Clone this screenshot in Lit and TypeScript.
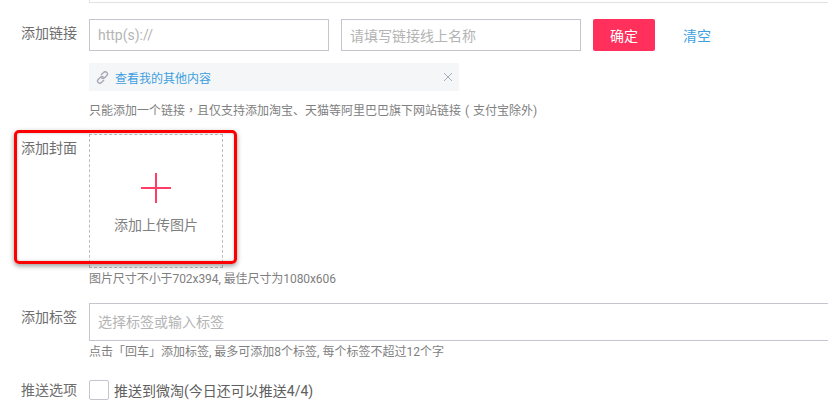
import { LitElement, html, css } from "lit";
import { customElement } from "lit/decorators.js";

@customElement("app-root")
export class AppRoot extends LitElement {
  static styles = css`
    :host {
      display: block;
      width: 828px;
      height: 406px;
      overflow: hidden;
      position: relative;
      background: #fff;
      font-family: Roboto, "Noto Sans CJK SC", sans-serif;
      font-size: 14px;
      color: #6e6e6e;
    }
    .page { padding-left: 21px; }
    .top-input {
      margin-left: 89px;
      width: 800px;
      height: 3px;
      box-sizing: border-box;
      border-bottom: 1px solid #e2e2e6;
      border-left: 1px solid #e2e2e6;
    }
    .row { display: flex; }
    .label { width: 68px; flex: none; line-height: 20px; white-space: nowrap; }
    .body { flex: 1; min-width: 0; }
    .links { margin-top: 16px; }
    .links .label { padding-top: 4px; }
    .controls { display: flex; gap: 12px; align-items: stretch; height: 32px; }
    .input {
      box-sizing: border-box;
      border: 1px solid #c4c6cf;
      padding: 0 8px 1px 8px;
      color: #b4b4b4;
      display: flex;
      align-items: center;
      white-space: nowrap;
    }
    .w240 { width: 240px; }
    .btn {
      width: 62px;
      background: #ff305c;
      color: #fff;
      border-radius: 2px;
      display: flex;
      align-items: center;
      justify-content: center;
      padding-bottom: 1px;
      box-sizing: border-box;
    }
    .clear { color: #3d9fe0; margin-left: 16px; display: flex; align-items: center; padding-bottom: 1px; }
    .linkbox {
      margin-top: 12px;
      width: 370px;
      height: 28px;
      box-sizing: border-box;
      background: #f5f6f8;
      display: flex;
      align-items: center;
      padding: 0 6px 0 7px;
      font-size: 12px;
      color: #3d9fe0;
    }
    .linkbox svg.chain { margin-right: 6px; }
    .linkbox span { flex: 1; }
    .hint { font-size: 12px; line-height: 18px; height: 18px; color: #808080; white-space: nowrap; }
    .tc { font-family: "Noto Sans CJK TC", sans-serif; line-height: 0; }
    .open { display: inline-block; width: 12px; text-align: center; line-height: 0; }
    .h1 { margin-top: 11px; }
    .cover { margin-top: 14px; }
    .cover .label { padding-top: 4px; }
    .upload {
      box-sizing: border-box;
      width: 134px;
      height: 134px;
      border: 1px dashed #bdbdbd;
      display: flex;
      flex-direction: column;
      align-items: center;
      padding-top: 37px;
    }
    .upload .txt { margin-top: 11px; line-height: 20px; color: #808080; white-space: nowrap; }
    .h2 { margin-top: 2px; letter-spacing: -0.07px; }
    .tags { margin-top: 15px; }
    .tags .label { padding-top: 4px; }
    .tag-input { height: 38px; width: 800px; padding-bottom: 3px; }
    .h3 { margin-top: 2px; }
    .push { margin-top: 19px; align-items: center; }
    .check {
      box-sizing: border-box;
      width: 20px;
      height: 20px;
      border: 1px solid #c4c6cf;
      border-radius: 2px;
      flex: none;
    }
    .push-body { display: flex; align-items: center; gap: 5px; color: #606060; white-space: nowrap; }
    .mark {
      position: absolute;
      left: 14px;
      top: 130px;
      width: 223px;
      height: 134px;
      box-sizing: border-box;
      border: 3px solid #ff0000;
      border-radius: 5px;
      box-shadow: 0 2px 5px rgba(0, 0, 0, 0.4), inset 0 0 3px rgba(0, 0, 0, 0.25);
      pointer-events: none;
    }
  `;

  render() {
    return html`
      <div class="top-input"></div>
      <div class="page">
        <div class="row links">
          <div class="label">添加链接</div>
          <div class="body">
            <div class="controls">
              <div class="input w240">http(s)://</div>
              <div class="input w240">请填写链接线上名称</div>
              <div class="btn">确定</div>
              <div class="clear">清空</div>
            </div>
            <div class="linkbox">
              <svg class="chain" width="13" height="13" viewBox="0 0 13 13" fill="none" stroke="#a4a9b5" stroke-width="1.4" stroke-linecap="round">
                <path d="M5.4 3.6 7.6 1.5a2.2 2.2 0 0 1 3.2 3.1L8.6 6.8a2.2 2.2 0 0 1-3 .2" />
                <path d="M7.6 9.4 5.4 11.5a2.2 2.2 0 0 1-3.2-3.1L4.4 6.2a2.2 2.2 0 0 1 3-.2" />
              </svg>
              <span>查看我的其他内容</span>
              <svg width="10" height="10" viewBox="0 0 10 10" stroke="#a9adb8" stroke-width="1">
                <path d="M1 1l8 8M9 1l-8 8" />
              </svg>
            </div>
            <div class="hint h1">只能添加一个链接<span class="tc">，</span>且仅支持添加淘宝、天猫等阿里巴巴旗下网站链接<span class="open">(</span>支付宝除外)</div>
          </div>
        </div>
        <div class="row cover">
          <div class="label">添加封面</div>
          <div class="body">
            <div class="upload">
              <svg width="32" height="32" viewBox="0 0 32 32" stroke="#ff3d66" stroke-width="2">
                <path d="M16 1v30M1 16h30" />
              </svg>
              <div class="txt">添加上传图片</div>
            </div>
            <div class="hint h2">图片尺寸不小于702x394, 最佳尺寸为1080x606</div>
          </div>
        </div>
        <div class="row tags">
          <div class="label">添加标签</div>
          <div class="body">
            <div class="input tag-input">选择标签或输入标签</div>
            <div class="hint h3">点击「回车」添加标签, 最多可添加8个标签, 每个标签不超过12个字</div>
          </div>
        </div>
        <div class="row push">
          <div class="label">推送选项</div>
          <div class="push-body">
            <div class="check"></div>
            <span>推送到微淘(今日还可以推送4/4)</span>
          </div>
        </div>
      </div>
      <div class="mark"></div>
    `;
  }
}
